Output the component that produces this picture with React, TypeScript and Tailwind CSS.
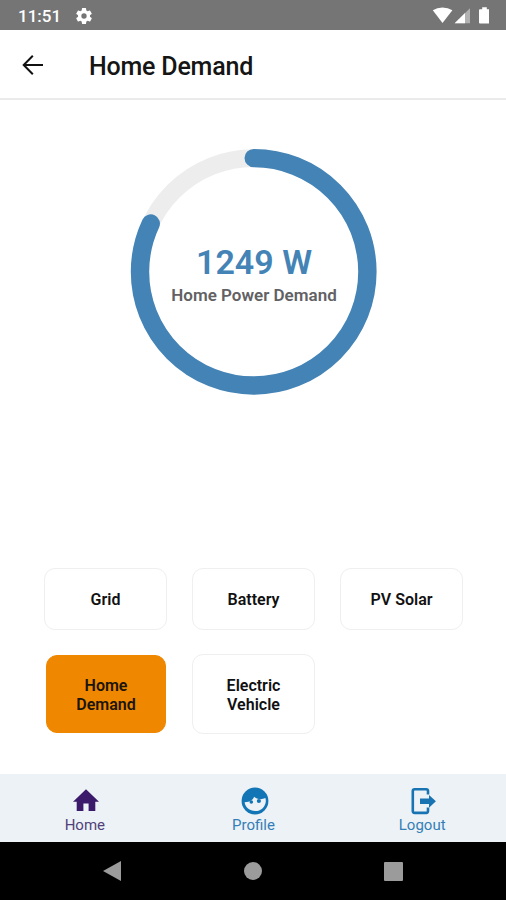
import React from 'react';

const RADIUS = 113.7;
const LENGTH = 2 * Math.PI * RADIUS;

function Gauge({ percent, value, label }: { percent: number; value: string; label: string }) {
  return (
    <div className="relative mx-auto mt-[48px] h-[248px] w-[248px]">
      <svg viewBox="0 0 248 248" className="block h-full w-full">
        <circle cx="124.7" cy="123.8" r={RADIUS} fill="none" stroke="#ededed" strokeWidth="17.6" />
        <circle
          cx="124.7"
          cy="123.8"
          r={RADIUS}
          fill="none"
          stroke="#4383b6"
          strokeWidth="18.4"
          strokeLinecap="round"
          strokeDasharray={`${(LENGTH * percent) / 100} ${LENGTH}`}
          transform="rotate(-90 124.7 123.8)"
        />
      </svg>
      <div className="absolute inset-0 flex flex-col items-center pt-[94px] pl-[2px]">
        <span className="text-[34px] leading-[40px] font-semibold text-[#4383b6]">{value}</span>
        <span className="mt-[3px] text-[17px] leading-[20px] font-semibold whitespace-nowrap text-[#626164]">{label}</span>
      </div>
    </div>
  );
}

function Option({ label, active = false }: { label: string; active?: boolean }) {
  return (
    <button
      className={`flex items-center justify-center rounded-[11px] border px-6 pt-px text-center text-[16px] leading-[19px] font-semibold ${
        active ? 'my-px ml-[2px] mr-px border-[#ef8700] bg-[#ef8700] text-[#1b1409]' : 'border-[#efefef] bg-white text-[#111]'
      }`}
    >
      {label}
    </button>
  );
}

function HomeIcon() {
  return (
    <svg viewBox="0 0 28 28" className="h-7 w-7" fill="#3c1a6b">
      <path d="M14 2.2 1 14.8h3.7V24h6.7v-7.6h5.2V24h6.7v-9.2H27z" />
    </svg>
  );
}

function ProfileIcon() {
  return (
    <svg viewBox="0 0 28 28" className="h-7 w-7">
      <circle cx="14" cy="14" r="13.4" fill="#1275b5" />
      <path
        d="M3.6 15.3c2.8 0 4.8-.5 6.5-1.7 1.4-1 2.3-2.3 3-3.9.9.8 1.8 1.4 2.9 1.8 2.7 1 5.8.8 8.4-.5.3 1.1.5 2.2.4 3.4-.5 5.6-4.9 9.6-10.6 9.6-5.7 0-9.9-3.4-10.6-8.7z"
        fill="#edf2f6"
      />
      <circle cx="10.3" cy="15" r="1.8" fill="#1275b5" />
      <circle cx="17.9" cy="14" r="2.1" fill="#1275b5" />
    </svg>
  );
}

function LogoutIcon() {
  return (
    <svg viewBox="0 0 28 28" className="h-7 w-7">
      <path
        d="M18 7.6V4.1q0-1.8-1.8-1.8H4.6q-1.8 0-1.8 1.8v20q0 1.8 1.8 1.8h11.6q1.8 0 1.8-1.8v-3.5"
        fill="none"
        stroke="#1873b2"
        strokeWidth="2.6"
      />
      <path d="M10 11.6h9V8l6.9 6.3-6.9 6.4v-3.8h-9z" fill="#1873b2" />
    </svg>
  );
}

function Tab({ icon, label, color }: { icon: React.ReactNode; label: string; color: string }) {
  return (
    <div className={`flex flex-1 flex-col items-center pt-[13px] pl-px ${color}`}>
      <div className="pl-[3px]">{icon}</div>
      <span className="mt-[1px] text-[15px] leading-[18px]">{label}</span>
    </div>
  );
}

export default function App() {
  return (
    <div className="flex h-[900px] w-[506px] flex-col overflow-hidden bg-white font-[Roboto,sans-serif]">
      <div className="flex h-[30px] shrink-0 items-center bg-[#757575] pr-[16px] pl-[18px] text-white">
        <span className="w-[56px] pt-[2px] text-[17px] leading-[20px] font-medium">11:51</span>
        <svg viewBox="0 0 24 24" className="mt-px h-[20px] w-[20px]" fill="#fff">
          <path d="M19.14 12.94c.04-.3.06-.61.06-.94s-.02-.64-.07-.94l2.03-1.58a.49.49 0 0 0 .12-.61l-1.92-3.32a.49.49 0 0 0-.59-.22l-2.39.96a7 7 0 0 0-1.62-.94l-.36-2.54a.48.48 0 0 0-.48-.41h-3.84a.48.48 0 0 0-.47.41l-.36 2.54c-.59.24-1.13.57-1.62.94l-2.39-.96a.48.48 0 0 0-.59.22L2.74 8.87a.48.48 0 0 0 .12.61l2.03 1.58a6 6 0 0 0 0 1.88l-2.03 1.58a.49.49 0 0 0-.12.61l1.92 3.32c.12.22.37.29.59.22l2.39-.96c.5.38 1.03.7 1.62.94l.36 2.54c.05.24.24.41.48.41h3.84c.24 0 .44-.17.47-.41l.36-2.54a7 7 0 0 0 1.62-.94l2.39.96c.22.08.47 0 .59-.22l1.92-3.32a.48.48 0 0 0-.12-.61zM12 15.2a3.2 3.2 0 1 1 0-6.4 3.2 3.2 0 0 1 0 6.4" />
        </svg>
        <svg viewBox="0 0 58 18" className="ml-auto h-[18px] w-[58px]" fill="#fff">
          <path d="M.8 4.3Q5 1.5 10.5 1.5T20.4 4.3L10.5 17z" />
          <path d="M38 2.3v14.9H22.7z" fill="#b2b2b2" />
          <path d="M33 7.1v10.1H22.7z" />
          <path d="M48 3.2h2.2v-2h4.6v2H57v14.2h-9q-1 0-1-1V4.2q0-1 1-1z" />
        </svg>
      </div>

      <header className="flex h-[70px] shrink-0 items-center border-b-2 border-[#ebebeb] pl-[22px]">
        <svg viewBox="0 0 22 22" className="mt-px h-[22px] w-[22px]" fill="none" stroke="#111" strokeWidth="2">
          <path d="M21 11H2.5M10.8 1.8 1.7 11l9.1 9.2" />
        </svg>
        <h1 className="mt-[6px] ml-[45px] text-[25px] leading-[30px] font-medium tracking-[-0.2px] text-[#151515]">Home Demand</h1>
      </header>

      <main className="flex min-h-0 flex-1 flex-col">
        <Gauge percent={81.9} value="1249 W" label="Home Power Demand" />
        <div className="mt-[172px] ml-[44px] grid w-[419px] grid-cols-[123px_123px_123px] grid-rows-[62px_80px] gap-x-[25px] gap-y-[24px]">
          <Option label="Grid" />
          <Option label="Battery" />
          <Option label="PV Solar" />
          <Option label="Home Demand" active />
          <Option label="Electric Vehicle" />
        </div>
      </main>

      <nav className="flex h-[68px] shrink-0 bg-[#edf2f6]">
        <Tab icon={<HomeIcon />} label="Home" color="text-[#51417b]" />
        <Tab icon={<ProfileIcon />} label="Profile" color="text-[#347fb7]" />
        <Tab icon={<LogoutIcon />} label="Logout" color="text-[#347fb7]" />
      </nav>

      <div className="flex h-[58px] shrink-0 items-center justify-between bg-black pr-[103px] pl-[102px]">
        <svg viewBox="0 0 20 22" className="h-[22px] w-[20px]" fill="#9b9b9b">
          <path d="M1 11 19 1v20z" />
        </svg>
        <div className="h-[18px] w-[18px] rounded-full bg-[#9b9b9b]" />
        <div className="h-[19px] w-[19px] rounded-[1px] bg-[#9b9b9b]" />
      </div>
    </div>
  );
}
